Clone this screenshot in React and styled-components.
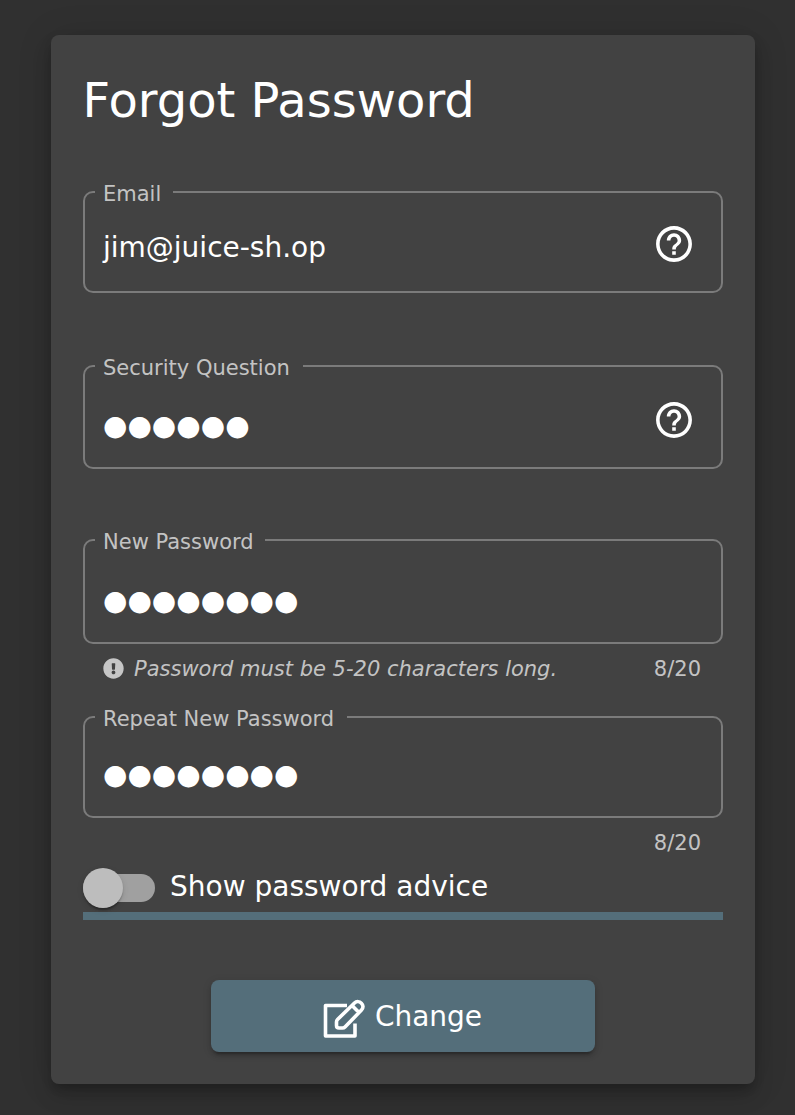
import React from 'react';
import styled, { createGlobalStyle } from 'styled-components';

const GlobalStyle = createGlobalStyle`
  *, *::before, *::after { box-sizing: border-box; }
  body {
    margin: 0;
    background: #303030;
    color: #fff;
    font-family: "DejaVu Sans", sans-serif;
    font-size: 28px;
  }
`;

const Page = styled.main`
  height: 1115px;
  padding: 35px 40px 31px 51px;
  overflow: hidden;
`;

const Card = styled.section`
  height: 1049px;
  padding: 37px 32px 32px;
  border-radius: 8px;
  background: #424242;
  box-shadow: 0 6px 10px -2px rgba(0, 0, 0, 0.2), 0 12px 20px rgba(0, 0, 0, 0.14),
    0 2px 36px rgba(0, 0, 0, 0.12);
`;

const Title = styled.h1`
  margin: 0 0 63px -0.5px;
  font-size: 48px;
  font-weight: 400;
  line-height: 56px;
`;

const Field = styled.fieldset`
  display: block;
  height: ${(p) => p.$height}px;
  margin: 0 0 ${(p) => p.$gap}px;
  padding: 0 29px 0 18px;
  min-width: 0;
  border: 2px solid #7b7b7b;
  border-radius: 10px;
`;

const FieldLabel = styled.legend`
  width: ${(p) => p.$notch}px;
  height: 2px;
  margin-left: -8px;
  padding: 0 0 0 8px;
  color: rgba(255, 255, 255, 0.7);
  font-size: 21px;
  line-height: 6px;
  white-space: nowrap;
`;

const FieldBody = styled.div`
  display: flex;
  justify-content: space-between;
  align-items: flex-start;
`;

const Value = styled.span`
  padding-top: ${(p) => p.$top}px;
  line-height: 34px;
`;

const HelpIcon = styled.svg`
  display: block;
  width: 44px;
  height: 44px;
  margin: ${(p) => p.$top}px -4px 0 0;
  fill: #fff;
`;

const HintRow = styled.div`
  display: flex;
  align-items: center;
  height: 24px;
  margin-bottom: ${(p) => p.$gap}px;
  padding: 0 22px 0 20px;
  color: rgba(255, 255, 255, 0.7);
  font-size: 21px;
  line-height: 24px;
`;

const HintIcon = styled.svg`
  width: 21px;
  height: 21px;
  margin: -2px 10px 0 0;
  fill: currentColor;
`;

const Counter = styled.span`
  margin-left: auto;
`;

const ToggleRow = styled.div`
  display: flex;
  align-items: center;
  height: 40px;
  margin-bottom: 4px;
`;

const Track = styled.span`
  display: flex;
  align-items: center;
  width: 72px;
  height: 28px;
  margin-right: 15px;
  border-radius: 14px;
  background: #a0a0a0;
`;

const Thumb = styled.span`
  width: 40px;
  height: 40px;
  flex: none;
  border-radius: 50%;
  background: #bdbdbd;
  box-shadow: 0 4px 2px -2px rgba(0, 0, 0, 0.2), 0 2px 2px rgba(0, 0, 0, 0.14),
    0 2px 6px rgba(0, 0, 0, 0.12);
`;

const ToggleLabel = styled.span`
  line-height: 34px;
  margin-top: -2px;
`;

const Divider = styled.div`
  height: 8px;
  background: #546e7a;
`;

const ChangeButton = styled.button`
  display: flex;
  align-items: center;
  justify-content: center;
  gap: 9px;
  width: 384px;
  height: 72px;
  margin: 60px auto 0;
  padding: 0 2px 0 0;
  border: 0;
  border-radius: 8px;
  background: #546e7a;
  color: #fff;
  font: inherit;
  box-shadow: 0 6px 2px -4px rgba(0, 0, 0, 0.2), 0 4px 4px rgba(0, 0, 0, 0.14),
    0 2px 10px rgba(0, 0, 0, 0.12);
`;

const EditIcon = styled.svg`
  width: 44px;
  height: 40px;
  margin-top: 6px;
  fill: none;
  stroke: #fff;
  stroke-width: 3.6;
  stroke-linejoin: round;
`;

const Help = ({ top }) => (
  <HelpIcon viewBox="-0.25 -0.25 24.5 24.5" $top={top}>
    <path d="M11 18h2v-2h-2v2zm1-16C6.48 2 2 6.48 2 12s4.48 10 10 10 10-4.48 10-10S17.52 2 12 2zm0 18c-4.41 0-8-3.59-8-8s3.59-8 8-8 8 3.59 8 8-3.59 8-8 8zm0-14c-2.21 0-4 1.79-4 4h2c0-1.1.9-2 2-2s2 .9 2 2c0 2-3 1.75-3 5h2c0-2.25 3-2.5 3-5 0-2.21-1.79-4-4-4z" />
  </HelpIcon>
);

export default function App() {
  return (
    <>
      <GlobalStyle />
      <Page>
        <Card>
          <Title>Forgot Password</Title>
          <Field $height={102} $gap={72}>
            <FieldLabel $notch={78}>Email</FieldLabel>
            <FieldBody>
              <Value $top={38}>jim@juice-sh.op</Value>
              <Help top={29} />
            </FieldBody>
          </Field>
          <Field $height={104} $gap={70}>
            <FieldLabel $notch={208}>Security Question</FieldLabel>
            <FieldBody>
              <Value $top={42}>●●●●●●</Value>
              <Help top={31} />
            </FieldBody>
          </Field>
          <Field $height={105} $gap={13}>
            <FieldLabel $notch={170}>New Password</FieldLabel>
            <FieldBody>
              <Value $top={43}>●●●●●●●●</Value>
            </FieldBody>
          </Field>
          <HintRow $gap={35}>
            <HintIcon viewBox="0 0 512 512">
              <path d="M504 256c0 137-111 248-248 248S8 393 8 256 119 8 256 8s248 111 248 248zM256 306c-25.400 0-46 20.600-46 46s20.600 46 46 46 46-20.600 46-46-20.600-46-46-46zm-43.700-165.300l7.400 136c.4 6.400 5.600 11.300 12 11.300h48.500c6.400 0 11.600-5 12-11.300l7.400-136c.4-6.900-5.100-12.700-12-12.700h-63.400c-6.900 0-12.300 5.800-11.900 12.700z" />
            </HintIcon>
            <em>Password must be 5-20 characters long.</em>
            <Counter>8/20</Counter>
          </HintRow>
          <Field $height={102} $gap={13}>
            <FieldLabel $notch={252}>Repeat New Password</FieldLabel>
            <FieldBody>
              <Value $top={40}>●●●●●●●●</Value>
            </FieldBody>
          </Field>
          <HintRow $gap={13}>
            <Counter>8/20</Counter>
          </HintRow>
          <ToggleRow>
            <Track>
              <Thumb />
            </Track>
            <ToggleLabel>Show password advice</ToggleLabel>
          </ToggleRow>
          <Divider />
          <ChangeButton type="button">
            <EditIcon viewBox="-1 -0.5 44 40">
              <path d="M24 6H2.500V36.500H32V24" />
              <path d="M13.500 26v-3.500q0-1.500 1-2.500L31.500 3.500c4.500-4.200 11.500 2.500 7 7L22 27.500q-1 1-2.500 1H16q-2.500 0-2.500-2.500zM29.500 6.500l6.500 6.500" />
            </EditIcon>
            Change
          </ChangeButton>
        </Card>
      </Page>
    </>
  );
}
